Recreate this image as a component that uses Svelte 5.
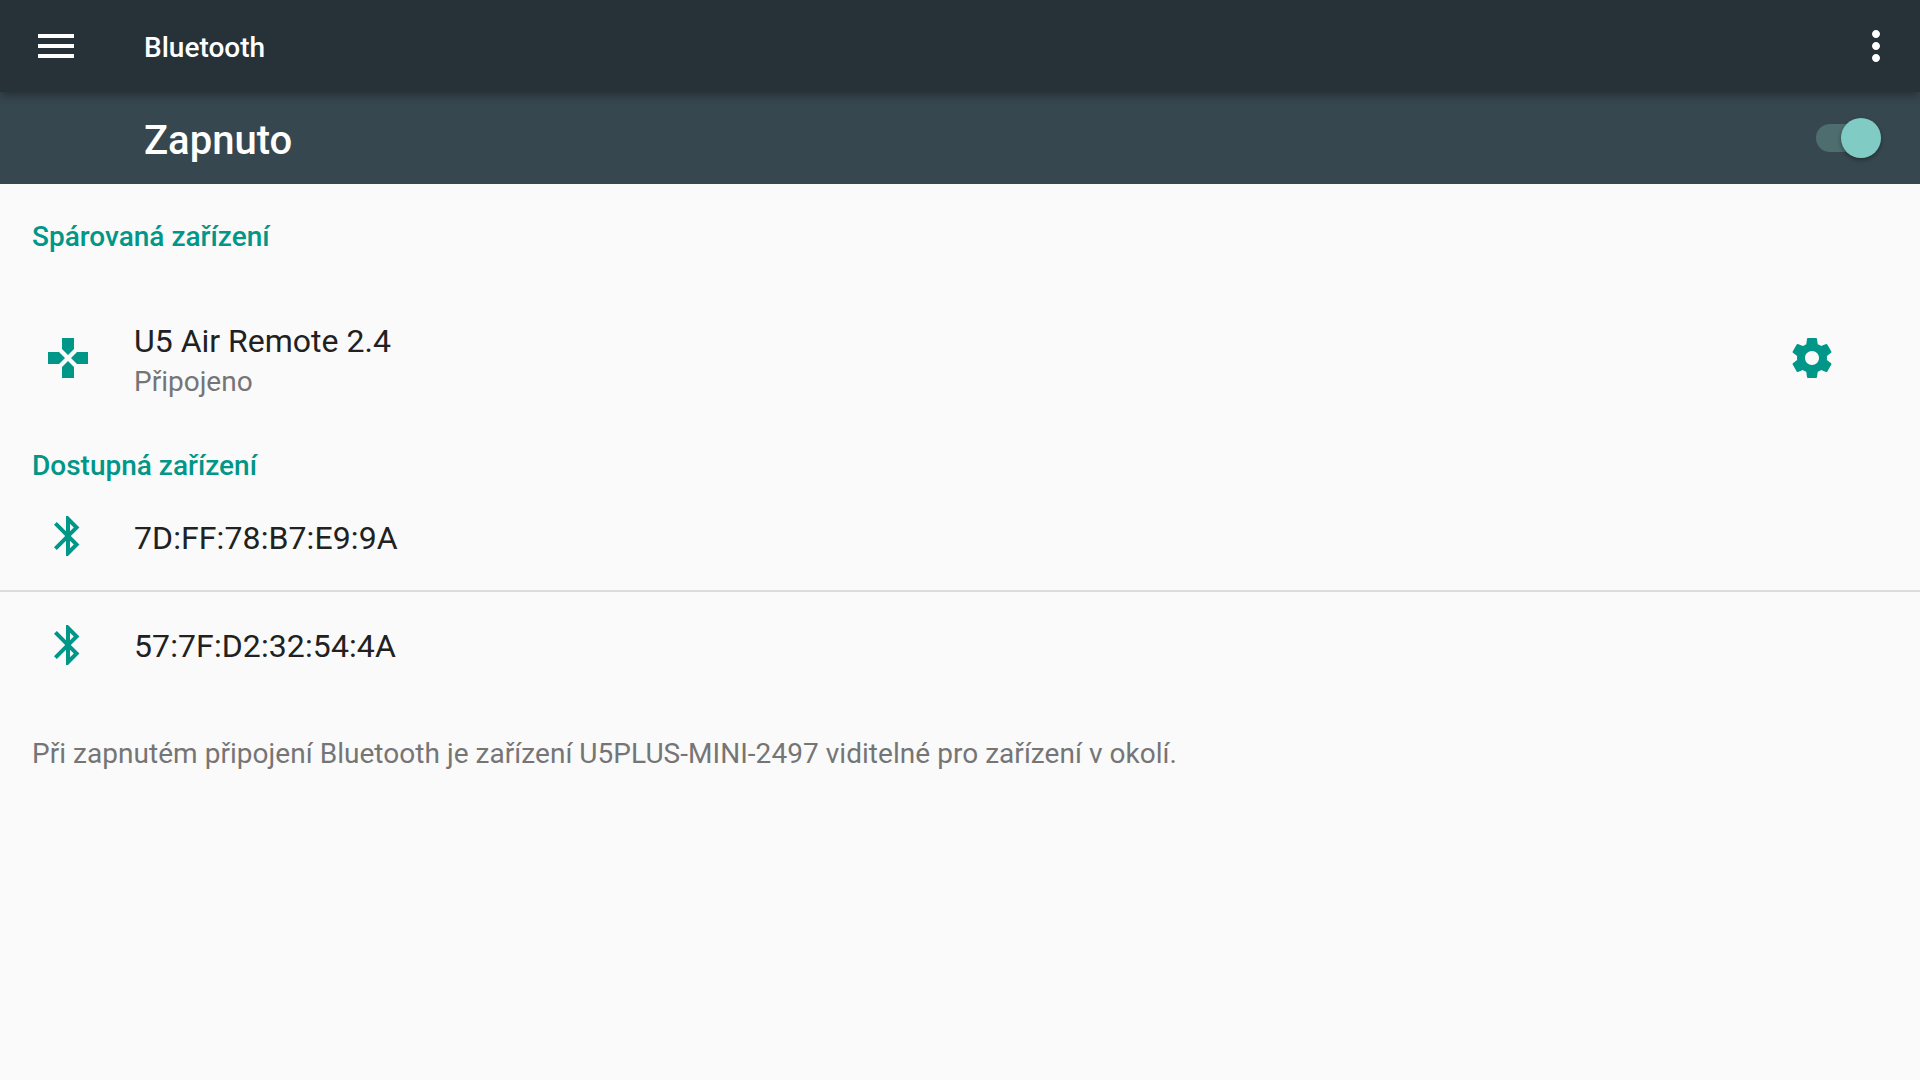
<script>
    const gamepad = 'M15 7.5V2H9v5.5l3 3 3-3zM7.5 9H2v6h5.5l3-3-3-3zM9 16.5V22h6v-5.5l-3-3-3 3zM16.5 9l-3 3 3 3H22V9h-5.5z'
    const gear = 'M19.43 12.98c.04-.32.07-.64.07-.98s-.03-.66-.07-.98l2.11-1.65c.19-.15.24-.42.12-.64l-2-3.46c-.12-.22-.39-.3-.61-.22l-2.49 1c-.52-.4-1.08-.73-1.69-.98l-.38-2.65C14.46 2.18 14.25 2 14 2h-4c-.25 0-.46.18-.49.42l-.38 2.65c-.61.25-1.17.59-1.69.98l-2.49-1c-.23-.09-.49 0-.61.22l-2 3.46c-.13.22-.07.49.12.64l2.11 1.65c-.04.32-.07.65-.07.98s.03.66.07.98l-2.11 1.65c-.19.15-.24.42-.12.64l2 3.46c.12.22.39.3.61.22l2.49-1c.52.4 1.08.73 1.69.98l.38 2.65c.03.24.24.42.49.42h4c.25 0 .46-.18.49-.42l.38-2.65c.61-.25 1.17-.59 1.69-.98l2.49 1c.23.09.49 0 .61-.22l2-3.46c.12-.22.07-.49-.12-.64l-2.11-1.65zM12 15.5c-1.93 0-3.5-1.57-3.5-3.5s1.57-3.5 3.5-3.5 3.5 1.57 3.5 3.5-1.57 3.5-3.5 3.5z'
    const bluetooth = 'M17.71 7.71L12 2h-1v7.59L6.41 5 5 6.41 10.59 12 5 17.59 6.41 19 11 14.41V22h1l5.71-5.71-4.3-4.29 4.3-4.29zM13 5.83l1.88 1.88L13 9.59V5.83zm1.88 10.46L13 18.17v-3.76l1.88 1.88z'

    const available = ['7D:FF:78:B7:E9:9A', '57:7F:D2:32:54:4A']
</script>

<div class="page">
    <header class="appbar">
        <svg class="icon" viewBox="0 0 24 24"><path fill="#fff" d="M3 18h18v-2H3v2zm0-5h18v-2H3v2zm0-7v2h18V6H3z" /></svg>
        <div class="title">Bluetooth</div>
        <svg class="icon" viewBox="0 0 24 24"><path fill="#fff" d="M12 8c1.1 0 2-.9 2-2s-.9-2-2-2-2 .9-2 2 .9 2 2 2zm0 2c-1.1 0-2 .9-2 2s.9 2 2 2 2-.9 2-2-.9-2-2-2zm0 6c-1.1 0-2 .9-2 2s.9 2 2 2 2-.9 2-2-.9-2-2-2z" /></svg>
    </header>

    <div class="switchbar">
        <div class="state">Zapnuto</div>
        <div class="track"><div class="thumb"></div></div>
    </div>

    <main>
        <div class="heading first">Spárovaná zařízení</div>
        <div class="row paired">
            <svg class="icon" viewBox="0 0 24 24"><path fill="#009688" d={gamepad} /></svg>
            <div class="labels">
                <div class="name">U5 Air Remote 2.4</div>
                <div class="status">Připojeno</div>
            </div>
            <svg class="icon gear" viewBox="0 0 24 24"><path fill="#009688" d={gear} /></svg>
        </div>

        <div class="heading">Dostupná zařízení</div>
        {#each available as address, i}
            <div class="row device" class:divided={i < available.length - 1}>
                <svg class="icon" viewBox="0 0 24 24"><path fill="#009688" d={bluetooth} /></svg>
                <div class="name">{address}</div>
            </div>
        {/each}

        <p class="footer">Při zapnutém připojení Bluetooth je zařízení U5PLUS-MINI-2497 viditelné pro zařízení v okolí.</p>
    </main>
</div>

<style>
    :global(body) {
        margin: 0;
        background: #fafafa;
    }

    .page {
        width: 1920px;
        height: 1080px;
        overflow: hidden;
        display: flex;
        flex-direction: column;
        background: #fafafa;
        font-family: Roboto, sans-serif;
    }

    .icon {
        width: 48px;
        height: 48px;
        flex: none;
        display: block;
    }

    .appbar {
        height: 92px;
        flex: none;
        box-sizing: border-box;
        padding: 0 20px 0 32px;
        display: flex;
        align-items: center;
        background: #263238;
        position: relative;
        z-index: 1;
        box-shadow: 0 4px 8px rgba(0, 0, 0, 0.3);
    }

    .title {
        flex: 1;
        margin-left: 64px;
        margin-top: 2px;
        color: #fff;
        font-size: 28px;
        font-weight: 500;
    }

    .switchbar {
        height: 92px;
        flex: none;
        box-sizing: border-box;
        padding: 0 44px 0 144px;
        display: flex;
        align-items: center;
        justify-content: space-between;
        background: #37474f;
    }

    .state {
        margin-top: 5px;
        color: #fff;
        font-size: 40px;
        font-weight: 500;
    }

    .track {
        width: 60px;
        height: 28px;
        border-radius: 14px;
        background: #4d6d6f;
        position: relative;
    }

    .thumb {
        position: absolute;
        right: -5px;
        top: -6px;
        width: 40px;
        height: 40px;
        border-radius: 50%;
        background: #80cbc4;
        box-shadow: 0 2px 4px rgba(0, 0, 0, 0.35);
    }

    main {
        flex: 1;
    }

    .heading {
        height: 44px;
        line-height: 44px;
        padding-left: 32px;
        color: #009688;
        font-size: 28px;
        font-weight: 500;
    }

    .heading.first {
        margin-top: 31px;
    }

    .row {
        display: flex;
        align-items: center;
        padding-left: 44px;
    }

    .row .labels,
    .device .name {
        margin-left: 42px;
    }

    .paired {
        height: 116px;
        margin-top: 41px;
        margin-bottom: 28px;
        padding-right: 84px;
    }

    .labels {
        flex: 1;
        margin-top: 5px;
    }

    .name {
        color: #212121;
        font-size: 32px;
        line-height: 41px;
    }

    .status {
        margin-top: 1px;
        color: #757575;
        font-size: 28px;
        line-height: 38px;
    }

    .device {
        height: 102px;
        padding-top: 3px;
    }

    .device .icon {
        margin-bottom: 2px;
    }

    .device .name {
        letter-spacing: 0.1px;
    }

    .divided {
        height: 100px;
        padding-top: 0;
        padding-bottom: 2px;
        border-bottom: 2px solid #dcdcdc;
    }

    .divided .icon {
        margin-bottom: 4px;
    }

    .footer {
        margin: 37px 0 0;
        padding-left: 32px;
        color: #757575;
        font-size: 28px;
        line-height: 40px;
        letter-spacing: 0.04px;
    }
</style>
